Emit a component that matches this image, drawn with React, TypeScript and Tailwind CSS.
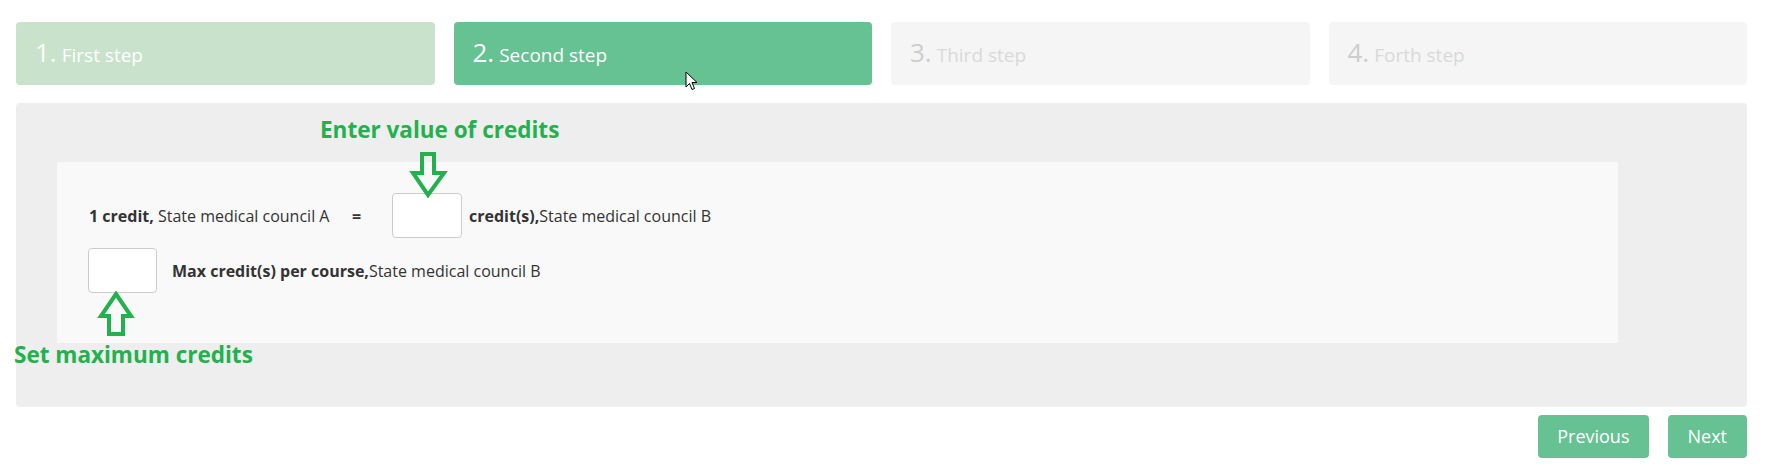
import { useState } from "react";

const steps = [
  { n: "1.", label: "First step", box: "bg-[#c8e2cc]", num: "text-white", text: "text-white" },
  { n: "2.", label: "Second step", box: "bg-[#66c293]", num: "text-white", text: "text-white" },
  { n: "3.", label: "Third step", box: "bg-[#f5f5f5]", num: "text-[#cdcdcd]", text: "text-[#d9d9d9]" },
  { n: "4.", label: "Forth step", box: "bg-[#f5f5f5]", num: "text-[#cdcdcd]", text: "text-[#d9d9d9]" },
];

function Arrow({ up = false, className }: { up?: boolean; className: string }) {
  // paint-style outlined arrow
  const pts = up
    ? "19,3 34,25 26,25 26,43 12,43 12,25 4,25"
    : "13,4 25,4 25,23 35,23 19,45 4,23 13,23";
  return (
    <svg className={className} width="40" height="48" viewBox="0 0 40 48">
      <polygon points={pts} fill="none" stroke="#22b14c" strokeWidth="4" strokeLinejoin="miter" />
    </svg>
  );
}

function Cursor() {
  return (
    <svg className="absolute left-[231px] top-[49px]" width="13" height="20" viewBox="0 0 13 20">
      <path
        d="M1 1 L1 16 L4.5 12.5 L7 18.5 L9.5 17.5 L7 11.5 L12 11.5 Z"
        fill="#fff"
        stroke="#000"
        strokeWidth="1"
        strokeLinejoin="round"
      />
    </svg>
  );
}

export default function App() {
  const [a, setA] = useState("");
  const [b, setB] = useState("");

  return (
    <div className="pl-[16px] pr-[20px] pt-[22px] font-['Open_Sans',sans-serif] text-[#333]">
      <div className="grid grid-cols-4 gap-[19px]">
        {steps.map((s, i) => (
          <div key={s.n} className={`relative h-[63px] rounded flex items-center pl-[19px] pb-[3px] ${s.box}`}>
            <span className="flex items-baseline">
              <span className={`text-[26px] leading-none ${s.num}`}>{s.n}</span>
              <span className={`ml-[5px] text-[19px] leading-none ${s.text}`}>{s.label}</span>
            </span>
            {i === 1 && <Cursor />}
          </div>
        ))}
      </div>

      <div className="relative mt-[18px] h-[304px] rounded bg-[#eeeeee] pl-[41px] pt-[59px]">
        <div className="w-[1561px] h-[181px] bg-[#f9f9f9] pl-[31px] pt-[31px] text-[16px]">
          <div className="flex items-center h-[45px]">
            <span className="ml-px w-[239px] whitespace-nowrap">
              <b>1 credit,</b> State medical council A
            </span>
            <b className="ml-[24px] w-[11px]">=</b>
            <input
              value={a}
              onChange={(e) => setA(e.target.value)}
              className="ml-[29px] w-[70px] h-[45px] rounded bg-white border border-[#cccccc] outline-none px-2"
            />
            <span className="ml-[7px] whitespace-nowrap">
              <b>credit(s),</b>State medical council B
            </span>
          </div>
          <div className="mt-[10px] flex items-center h-[45px]">
            <input
              value={b}
              onChange={(e) => setB(e.target.value)}
              className="w-[69px] h-[45px] rounded bg-white border border-[#cccccc] outline-none px-2"
            />
            <span className="ml-[15px] whitespace-nowrap">
              <b>Max credit(s) per course,</b>State medical council B
            </span>
          </div>
        </div>

        <div className="absolute left-[304px] top-[16px] text-[22.5px] leading-[22px] font-bold text-[#22b14c] whitespace-nowrap">
          Enter value of credits
        </div>
        <Arrow className="absolute left-[393px] top-[47px]" />
        <Arrow up className="absolute left-[81px] top-[188px]" />
        <div className="absolute left-[-2px] top-[241px] text-[22.5px] leading-[22px] font-bold text-[#22b14c] whitespace-nowrap">
          Set maximum credits
        </div>
      </div>

      <div className="mt-[8px] flex justify-end gap-[19px]">
        <button className="h-[43px] px-[19px] rounded bg-[#66c293] text-white text-[18px]">Previous</button>
        <button className="h-[43px] px-[20px] rounded bg-[#66c293] text-white text-[18px]">Next</button>
      </div>
    </div>
  );
}
